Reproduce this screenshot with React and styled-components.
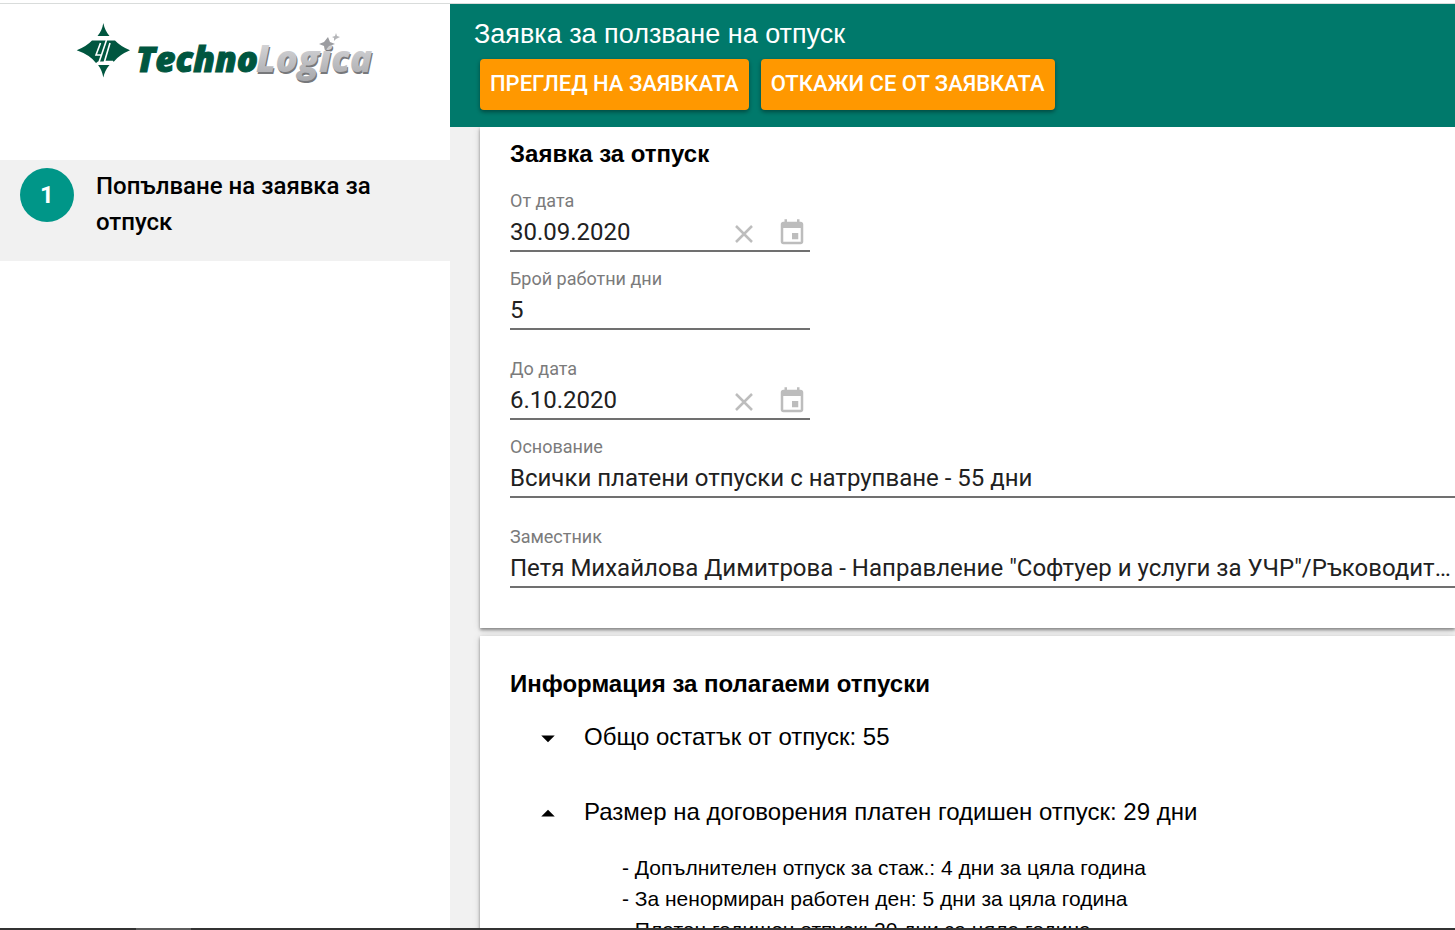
import React, { useState } from "react";
import styled, { createGlobalStyle } from "styled-components";

const GlobalStyle = createGlobalStyle`
  *, *::before, *::after { box-sizing: border-box; }
  body { margin: 0; background: #fff; color: #000; font-family: Roboto, "Liberation Sans", sans-serif; }
  h1, h2, p, ul { margin: 0; padding: 0; }
  button, input, select { font: inherit; color: inherit; }
`;

const Page = styled.div`
  display: flex;
  flex-direction: column;
  height: 100vh;
  overflow: hidden;
`;

const TopRule = styled.div`
  flex: none;
  height: 4px;
  border-bottom: 1px solid #d9dcdb;
`;

const Body = styled.div`
  flex: 1;
  min-height: 0;
  display: flex;
`;

const Sidebar = styled.aside`
  flex: none;
  width: 450px;
  background: #fff;
`;

const LogoLink = styled.a`
  display: block;
  height: 156px;
  padding: 16px 0 0 72px;
`;

const Step = styled.button`
  display: flex;
  align-items: flex-start;
  gap: 22px;
  width: 100%;
  padding: 8px 20px 21px;
  border: 0;
  background: #f1f1f1;
  text-align: left;
`;

const StepNumber = styled.span`
  flex: none;
  display: grid;
  place-items: center;
  width: 54px;
  height: 54px;
  border-radius: 50%;
  background: #009688;
  color: #fff;
  font-size: 24px;
  font-weight: 700;
`;

const StepLabel = styled.span`
  max-width: 300px;
  font-size: 24px;
  line-height: 36px;
  font-weight: 500;
`;

const Main = styled.main`
  flex: 1;
  min-width: 0;
  display: flex;
  flex-direction: column;
  background: #f1f1f1;
`;

const Header = styled.header`
  flex: none;
  padding: 12px 24px 17px;
  background: #00796b;
  color: #fff;
`;

const Title = styled.h1`
  font: 400 27px/36px "Liberation Sans", Arial, sans-serif;
`;

const Actions = styled.div`
  display: flex;
  gap: 12px;
  padding: 7px 6px 0;
`;

const ActionButton = styled.button`
  height: 51px;
  padding: 0 10px 2px;
  border: 0;
  border-radius: 4px;
  background: #ff9800;
  box-shadow: 0 2px 4px rgba(0, 0, 0, 0.4);
  font-size: 22px;
  font-weight: 500;
  text-transform: uppercase;
  white-space: nowrap;
`;

const Scroll = styled.div`
  flex: 1;
  min-height: 0;
  overflow: hidden;
  display: flex;
  flex-direction: column;
  gap: 8px;
  padding-left: 30px;
`;

const Card = styled.section`
  flex: none;
  padding: ${(p) => p.$top}px 0 13px 30px;
  background: #fff;
  box-shadow: 0 2px 3px rgba(0, 0, 0, 0.4), 0 1px 8px rgba(0, 0, 0, 0.12);
`;

const CardTitle = styled.h2`
  font: 700 24px/30px "Liberation Sans", Arial, sans-serif;
`;

const Form = styled.form`
  padding-top: 20px;
`;

const Field = styled.div`
  width: ${(p) => (p.$wide ? "100%" : "300px")};
  margin-bottom: ${(p) => (p.$tight ? 15 : 27)}px;
`;

const Label = styled.label`
  display: block;
  color: #7b7b7b;
  font-size: 18px;
  line-height: 24px;
`;

const Control = styled.div`
  display: flex;
  align-items: center;
  height: 39px;
  border-bottom: 2px solid #707070;
`;

const Input = styled.input`
  flex: 1;
  min-width: 0;
  height: 36px;
  padding: 0;
  border: 0;
  outline: 0;
  background: none;
  color: #212121;
  font-size: 24px;
`;

const Select = styled.select`
  appearance: none;
  width: 100%;
  height: 36px;
  padding: 0;
  border: 0;
  outline: 0;
  background: none;
  color: #212121;
  font-size: 24px;
`;

const IconButton = styled.button`
  flex: none;
  display: grid;
  place-items: center;
  width: 36px;
  height: 36px;
  padding: 2px 0 0;
  border: 0;
  background: none;
  color: #bdbdbd;
  & + & { margin-left: 12px; }
`;

const TreeToggle = styled.button`
  display: flex;
  align-items: center;
  gap: 18px;
  width: 100%;
  height: 75px;
  padding: 0 20px;
  border: 0;
  background: none;
  text-align: left;
  font: 400 24px/30px "Liberation Sans", Arial, sans-serif;
`;

const Details = styled.ul`
  padding: 3px 0 0 112px;
  list-style: none;
  font: 400 21px/31px "Liberation Sans", Arial, sans-serif;
`;

const Taskbar = styled.footer`
  flex: none;
  height: 2px;
  padding-left: 136px;
  background: #333;
`;

const TaskbarItem = styled.div`
  width: 55px;
  height: 2px;
  background: #5c5c5c;
`;

function Logo() {
  return (
    <svg width="310" height="76" viewBox="72 20 310 76" role="img" aria-label="TechnoLogica">
      <defs>
        <linearGradient id="silver" x1="0" y1="0" x2="0" y2="1">
          <stop offset="0" stopColor="#e2e2e4" />
          <stop offset="1" stopColor="#a5a6aa" />
        </linearGradient>
      </defs>
      <g fill="#00563f">
        <path d="M103.300 23Q105 31 109.500 36H97.500Q102 31 103.300 23z" />
        <path d="M103.300 77.500Q102 70 98 65H109.500Q105 70 103.300 77.500z" />
        <path d="M76.700 50.300Q87 46 92 40.500H115Q120 46 130 50.300Q119 55 114 61.500H98L96 63Q90 55 76.700 50.300z" />
      </g>
      <path d="M100.500 43L96 55H101.500L106.500 40M110 43L104.500 61.500H113M101.500 55L98 65" fill="none" stroke="#fff" strokeWidth="1.600" />
      <g fontFamily="'Open Sans', sans-serif" fontWeight="800" fontStyle="italic" fontSize="37">
        <text x="136" y="72" fontSize="35" fill="#00563f" stroke="#00563f" strokeWidth="1">Techno</text>
        <text x="257" y="74" fill="#77787b">Logica</text>
        <text x="256" y="72" fill="url(#silver)">Logica</text>
      </g>
      <path d="M328 37L330 42L335 44L329 46L325 51L324 46L319 44L324 42z" fill="#9b9ca0" />
      <path d="M336 33L337 36L340 37L336 39L334 41L334 38L332 37L335 36z" fill="#b4b5b8" />
    </svg>
  );
}

function CloseIcon() {
  return (
    <svg width="36" height="36" viewBox="0 0 36 36" fill="none" stroke="currentColor" strokeWidth="2.500" aria-hidden="true">
      <path d="M10 10L26 26M26 10L10 26" />
    </svg>
  );
}

function CalendarIcon() {
  return (
    <svg width="30" height="30" viewBox="0 0 24 24" fill="currentColor" aria-hidden="true">
      <path d="M17 12h-5v5h5v-5zM16 1v2H8V1H6v2H5c-1.110 0-1.990.9-1.990 2L3 19c0 1.100.89 2 2 2h14c1.100 0 2-.9 2-2V5c0-1.100-.9-2-2-2h-1V1h-2zm3 18H5V8h14v11z" />
    </svg>
  );
}

function Arrow({ up }) {
  return (
    <svg width="36" height="36" viewBox="0 0 24 24" aria-hidden="true">
      <path d={up ? "M7.500 15l4.500-4.500 4.500 4.500z" : "M7.500 11l4.500 4.500 4.500-4.500z"} />
    </svg>
  );
}

function DateField({ id, label, initial, tight }) {
  const [value, setValue] = useState(initial);
  return (
    <Field $tight={tight}>
      <Label htmlFor={id}>{label}</Label>
      <Control>
        <Input id={id} value={value} onChange={(e) => setValue(e.target.value)} />
        <IconButton type="button" aria-label="Изчисти" onClick={() => setValue("")}><CloseIcon /></IconButton>
        <IconButton type="button" aria-label="Календар"><CalendarIcon /></IconButton>
      </Control>
    </Field>
  );
}

function SelectField({ id, label, option, tight }) {
  return (
    <Field $wide $tight={tight}>
      <Label htmlFor={id}>{label}</Label>
      <Control>
        <Select id={id}><option>{option}</option></Select>
      </Control>
    </Field>
  );
}

export default function App() {
  return (
    <>
      <GlobalStyle />
      <Page>
        <TopRule />
        <Body>
          <Sidebar>
            <LogoLink href="#"><Logo /></LogoLink>
            <Step type="button">
              <StepNumber>1</StepNumber>
              <StepLabel>Попълване на заявка за отпуск</StepLabel>
            </Step>
          </Sidebar>
          <Main>
            <Header>
              <Title>Заявка за ползване на отпуск</Title>
              <Actions>
                <ActionButton type="button">Преглед на заявката</ActionButton>
                <ActionButton type="button">Откажи се от заявката</ActionButton>
              </Actions>
            </Header>
            <Scroll>
              <Card $top={12}>
                <CardTitle>Заявка за отпуск</CardTitle>
                <Form>
                  <DateField id="from" label="От дата" initial="30.09.2020" tight />
                  <Field>
                    <Label htmlFor="days">Брой работни дни</Label>
                    <Control><Input id="days" defaultValue="5" /></Control>
                  </Field>
                  <DateField id="to" label="До дата" initial="6.10.2020" tight />
                  <SelectField id="reason" label="Основание" option="Всички платени отпуски с натрупване - 55 дни" />
                  <SelectField id="deputy" label="Заместник" option={'Петя Михайлова Димитрова - Направление "Софтуер и услуги за УЧР"/Ръководит…'} />
                </Form>
              </Card>
              <Card $top={33}>
                <CardTitle>Информация за полагаеми отпуски</CardTitle>
                <TreeToggle type="button" aria-expanded="false"><Arrow />Общо остатък от отпуск: 55</TreeToggle>
                <TreeToggle type="button" aria-expanded="true"><Arrow up />Размер на договорения платен годишен отпуск: 29 дни</TreeToggle>
                <Details>
                  <li>- Допълнителен отпуск за стаж.: 4 дни за цяла година</li>
                  <li>- За ненормиран работен ден: 5 дни за цяла година</li>
                  <li>- Платен годишен отпуск: 20 дни за цяла година</li>
                </Details>
              </Card>
            </Scroll>
          </Main>
        </Body>
        <Taskbar><TaskbarItem /></Taskbar>
      </Page>
    </>
  );
}
